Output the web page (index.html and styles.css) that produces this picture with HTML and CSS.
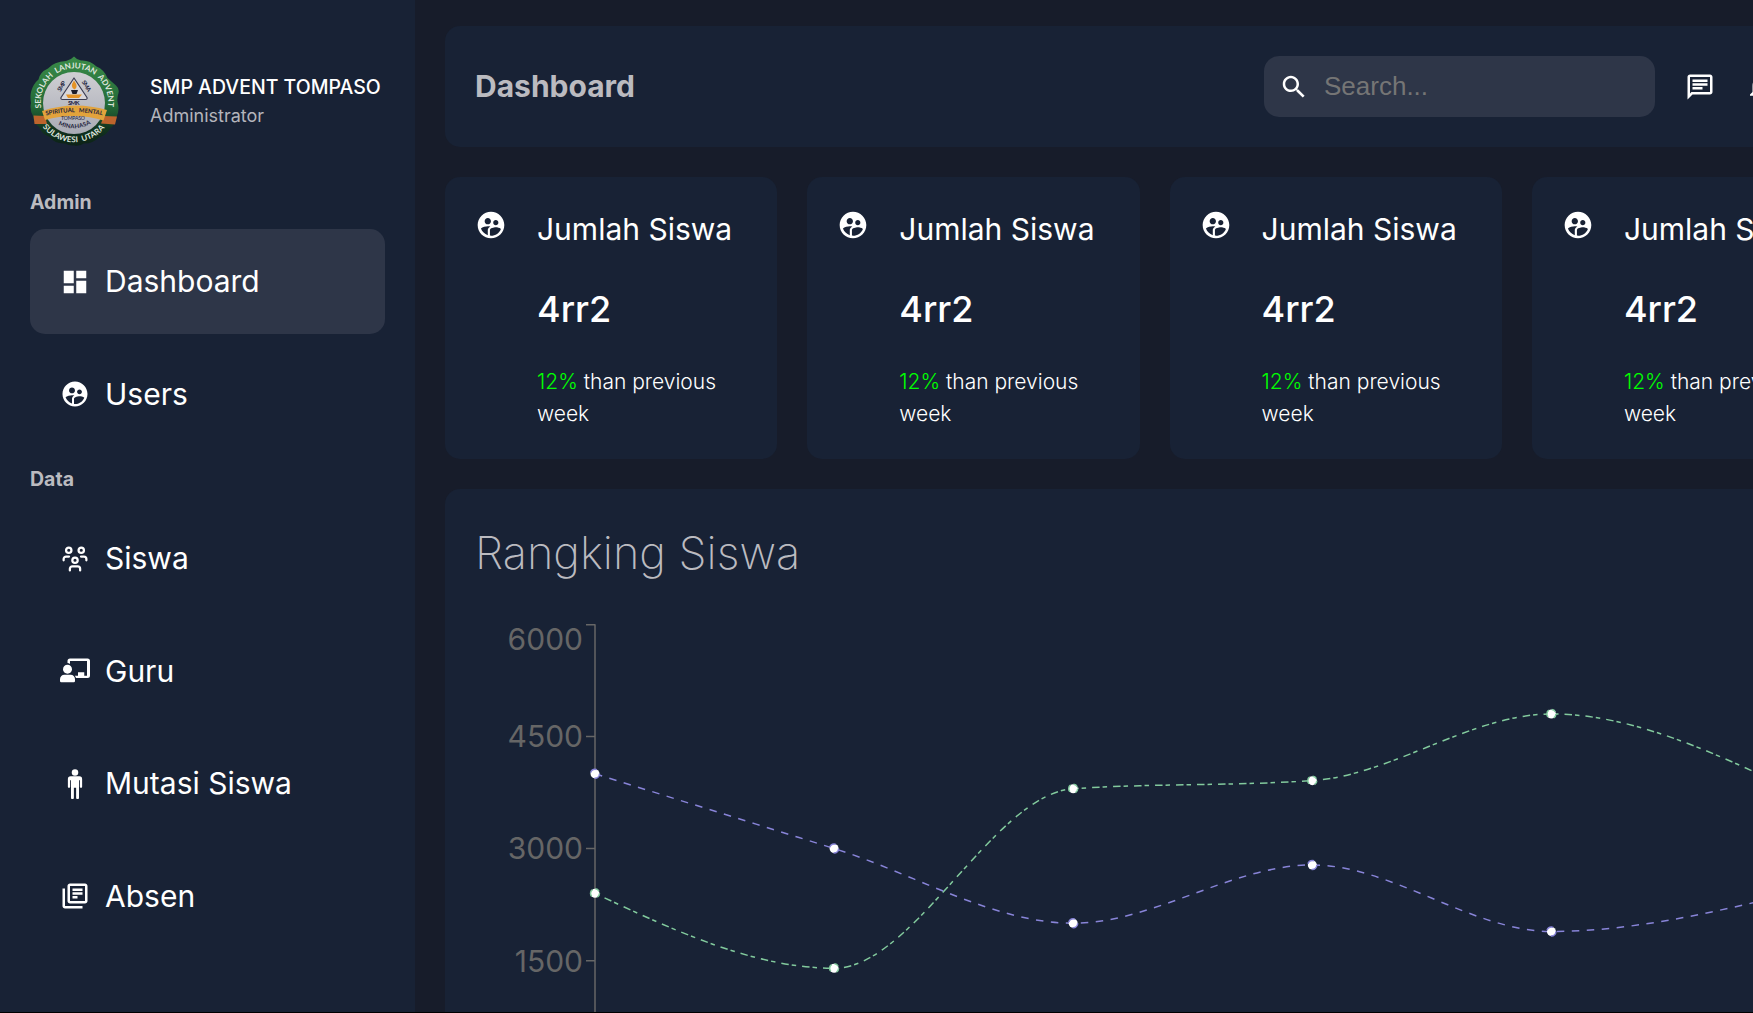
FILE: index.html
```html
<!DOCTYPE html>
<html lang="id">
<head>
<meta charset="utf-8">
<title>Dashboard</title>
<link rel="stylesheet" href="styles.css">
</head>
<body>
<svg class="defs" width="0" height="0">
  <symbol id="supervised" viewBox="0 0 24 24"><path d="M11.99 2c-5.52 0-10 4.48-10 10s4.48 10 10 10 10-4.48 10-10-4.48-10-10-10zm3.61 6.34c1.07 0 1.93.86 1.93 1.93 0 1.07-.86 1.93-1.93 1.93-1.07 0-1.93-.86-1.93-1.93-.01-1.07.86-1.93 1.93-1.93zm-6-1.58c1.3 0 2.36 1.06 2.36 2.36 0 1.3-1.06 2.36-2.36 2.36s-2.36-1.06-2.36-2.36c0-1.31 1.05-2.36 2.36-2.36zm0 9.13v3.75c-2.4-.75-4.3-2.6-5.14-4.96 1.05-1.12 3.67-1.69 5.14-1.69.53 0 1.2.08 1.9.22-1.64.87-1.9 2.02-1.9 2.68zM11.99 20c-.27 0-.53-.01-.79-.04v-4.07c0-1.42 2.94-2.13 4.4-2.13 1.07 0 2.92.39 3.84 1.15-1.17 2.97-4.06 5.09-7.45 5.09z"/></symbol>
</svg>
<div class="app">
  <aside class="sidebar">
    <div class="profile">
      <svg class="logo" viewBox="0 0 90 90">
        <defs>
          <linearGradient id="ring" x1="0" y1="0" x2="0" y2="1"><stop offset="0" stop-color="#3a8c48"/><stop offset=".55" stop-color="#246a38"/><stop offset=".8" stop-color="#123520"/><stop offset="1" stop-color="#0c2117"/></linearGradient>
          <linearGradient id="disc" x1="0" y1="0" x2="0" y2="1"><stop offset="0" stop-color="#cfcfd3"/><stop offset="1" stop-color="#a9abb5"/></linearGradient>
          <path id="arc-top" d="M11.500 53A33.700 33.700 0 1 1 77.500 53"/>
          <path id="arc-bottom" d="M11.500 69.500A39.800 39.800 0 0 0 76.500 69.500"/>
          <path id="arc-ribbon" d="M15 59.700Q44 52.500 76 60.200"/>
          <path id="arc-min" d="M26.500 67.500Q44 78 64 66"/>
        </defs>
        <path fill="url(#ring)" d="M44 .5Q46.500 3.500 51 4.500Q60 4 66.500 10.500Q74 13.500 77.500 22Q82 26 86 29.500Q89.500 32.500 88.500 37Q86.500 43 88 48Q89.500 55 86.500 61Q86 68 80.500 72Q77 79 69 81.500Q62 88 54 87.500Q49 90.500 44.500 89.500Q39 90 35 87.500Q25 88 19.500 81Q11.500 78 9 71Q3.500 67 3 60Q-.5 54 1 47Q0 41 1 36Q3 28 8.500 23.500Q10 16 18 12.500Q24 5.500 36 5Q41 4 44 .5z"/>
        <circle cx="44" cy="47" r="31" fill="url(#disc)"/>
        <path fill="#bd642d" d="M3.500 59.500L15 60l2 8L4.500 68zM74 60l13 .5-2 8-14-1z"/>
        <path fill="#e2a33c" d="M12 55Q44 44.500 77 54l-3.500 10.500Q44 56 15 64z"/>
        <path fill="#d9d7da" stroke="#3c3d52" stroke-width="1.200" stroke-linejoin="round" d="M44 22L57 41.500Q57.500 43.500 55.500 43.500H32.500Q30.500 43.500 31 41.500z"/>
        <path fill="#e49327" d="M36 38.500h16l-3 3.500H38zM44 24.500Q49 31 44.500 33.500Q39.500 31 44 24.500z"/>
        <path fill="#1e1d2a" d="M41 34h7l-1.500 4h-4z"/>
        <g class="logo-ring"><text><textPath href="#arc-top" startOffset="1" textLength="116">SEKOLAH&#160; LANJUTAN&#160; ADVENT</textPath></text>
        <text><textPath href="#arc-bottom" startOffset="2" textLength="71">SULAWESI&#160; UTARA</textPath></text></g>
        <g class="logo-ink"><text transform="translate(30.500 36) rotate(-58)" textLength="11">SMP</text><text transform="translate(51.500 26) rotate(58)" textLength="12">SMA</text><text x="38" y="49.300" textLength="11.500">SMK</text>
        <text><textPath href="#arc-ribbon" startOffset="1" textLength="57">SPIRITUAL&#160;&#160; MENTAL</textPath></text>
        <text x="31" y="63.500" class="logo-small" textLength="24">TOMPASO</text><text><textPath href="#arc-min" startOffset="2" textLength="34">MINAHASA</textPath></text></g>
      </svg>
      <div class="who"><div class="school">SMP ADVENT TOMPASO</div><div class="role">Administrator</div></div>
    </div>
    <nav>
      <h2 class="group">Admin</h2>
      <a class="item active"><svg viewBox="0 0 24 24"><path d="M3 13h8V3H3v10zm0 8h8v-6H3v6zm10 0h8V11h-8v10zm0-18v6h8V3h-8z"/></svg>Dashboard</a>
      <a class="item"><svg><use href="#supervised"/></svg>Users</a>
      <h2 class="group second">Data</h2>
      <a class="item"><svg class="outline" viewBox="0 0 24 24"><circle cx="7" cy="5" r="2.150"/><circle cx="17" cy="5" r="2.150"/><circle cx="12" cy="13" r="2.150"/><path d="M2.900 13v-1a2 2 0 0 1 2-2h2.300M21.100 13v-1a2 2 0 0 0-2-2h-2.300M7.900 21.100v-1.300a2 2 0 0 1 2-2h4.200a2 2 0 0 1 2 2v1.300"/></svg>Siswa</a>
      <a class="item"><svg viewBox="0 0 24 24"><circle cx="6" cy="10.500" r="3.600"/><path d="M3.500 15h5a3.500 3.500 0 0 1 3.500 3.500V20a1 1 0 0 1-1 1H1a1 1 0 0 1-1-1v-1.500A3.500 3.500 0 0 1 3.500 15z"/><path d="M6 5.500V4a2 2 0 0 1 2-2h14a2 2 0 0 1 2 2v11.500a2 2 0 0 1-2 2h-9.200a5 5 0 0 0-1-1.800h2.600V13h5v2.700h2.200V3.900H8v2.400a5 5 0 0 0-2-.8z"/></svg>Guru</a>
      <a class="item"><svg viewBox="0 0 24 24"><circle cx="12" cy="2.700" r="2.600"/><path d="M8.500 5.800h7a2.200 2.200 0 0 1 2.200 2.200v6.200a.9.9 0 0 1-1.800 0V9h-.7v14a1.150 1.150 0 0 1-2.300 0v-8h-1.800v8a1.150 1.150 0 0 1-2.300 0V9h-.7v5.200a.9.9 0 0 1-1.800 0V8a2.200 2.200 0 0 1 2.200-2.200z"/></svg>Mutasi Siswa</a>
      <a class="item"><svg viewBox="0 0 24 24"><path d="M4 6H2v14c0 1.100.9 2 2 2h14v-2H4V6zm16-4H8c-1.100 0-2 .9-2 2v12c0 1.100.9 2 2 2h12c1.100 0 2-.9 2-2V4c0-1.100-.9-2-2-2zm0 14H8V4h12v12zM10 9h8v2h-8zm0 3h4v2h-4zm0-6h8v2h-8z"/></svg>Absen</a>
    </nav>
  </aside>
  <main class="main">
    <header class="topbar">
      <h1>Dashboard</h1>
      <div class="tools">
        <div class="search"><svg viewBox="0 0 24 24"><path d="M15.500 14h-.79l-.28-.27C15.410 12.590 16 11.110 16 9.500 16 5.910 13.090 3 9.500 3S3 5.910 3 9.500 5.910 16 9.500 16c1.610 0 3.090-.59 4.230-1.570l.27.28v.79l5 4.990L20.490 19l-4.990-5zm-6 0C7.010 14 5 11.990 5 9.500S7.010 5 9.500 5 14 7.010 14 9.500 11.990 14 9.500 14z"/></svg><input type="text" placeholder="Search..."></div>
        <svg viewBox="0 0 24 24"><path d="M4 4h16v12H5.170L4 17.170V4m0-2c-1.100 0-1.990.9-1.990 2L2 22l4-4h14c1.100 0 2-.9 2-2V4c0-1.100-.9-2-2-2H4zm2 10h8v2H6v-2zm0-3h12v2H6V9zm0-3h12v2H6V6z"/></svg>
        <svg viewBox="0 0 24 24"><path d="M12 22c1.100 0 2-.9 2-2h-4c0 1.100.9 2 2 2zm6-6v-5c0-3.070-1.630-5.640-4.500-6.320V4c0-.83-.67-1.500-1.500-1.500s-1.500.67-1.500 1.500v.68C7.640 5.360 6 7.920 6 11v5l-2 2v1h16v-1l-2-2zm-2 1H8v-6c0-2.480 1.510-4.500 4-4.500s4 2.020 4 4.500v6z"/></svg>
      </div>
    </header>
    <section class="cards">
      <article class="card"><svg><use href="#supervised"/></svg><div><h3>Jumlah Siswa</h3><strong>4rr2</strong><p><span>12%</span> than previous week</p></div></article>
      <article class="card"><svg><use href="#supervised"/></svg><div><h3>Jumlah Siswa</h3><strong>4rr2</strong><p><span>12%</span> than previous week</p></div></article>
      <article class="card"><svg><use href="#supervised"/></svg><div><h3>Jumlah Siswa</h3><strong>4rr2</strong><p><span>12%</span> than previous week</p></div></article>
      <article class="card"><svg><use href="#supervised"/></svg><div><h3>Jumlah Siswa</h3><strong>4rr2</strong><p><span>12%</span> than previous week</p></div></article>
    </section>
    <section class="panel">
      <h2>Rangking Siswa</h2>
      <svg class="chart" viewBox="475 617 1360 460" width="1360" height="460">
        <g class="axis"><path d="M595 624.250V1072.750M586 624.750h9M586 736.600h9M586 848.600h9M586 960.700h9"/></g>
        <g class="ticks"><text x="583" y="650">6000</text><text x="583" y="747">4500</text><text x="583" y="859">3000</text><text x="583" y="972">1500</text></g>
        <g class="pv"><path d="M595 893.350C674.700 930.800 754.400 968.250 834.100 968.250C913.800 968.250 993.500 794.080 1073.200 788.700C1152.900 783.320 1232.600 786.010 1312.300 780.630C1392 775.250 1471.700 713.950 1551.400 713.950C1631.100 713.950 1710.800 751.330 1790.500 788.700"/>
          <circle cx="595" cy="893.350" r="4.500"/><circle cx="834.100" cy="968.250" r="4.500"/><circle cx="1073.200" cy="788.700" r="4.500"/><circle cx="1312.300" cy="780.630" r="4.500"/><circle cx="1551.400" cy="713.950" r="4.500"/></g>
        <g class="uv"><path d="M595 773.750C674.700 798.670 754.400 823.580 834.100 848.500C913.800 873.420 993.500 923.250 1073.200 923.250C1152.900 923.250 1232.600 864.950 1312.300 864.950C1392 864.950 1471.700 931.470 1551.400 931.470C1631.100 931.470 1710.800 912.790 1790.500 894.100"/>
          <circle cx="595" cy="773.750" r="4.500"/><circle cx="834.100" cy="848.500" r="4.500"/><circle cx="1073.200" cy="923.250" r="4.500"/><circle cx="1312.300" cy="864.950" r="4.500"/><circle cx="1551.400" cy="931.470" r="4.500"/></g>
      </svg>
    </section>
  </main>
</div>
</body>
</html>
```
FILE: styles.css
```css
* { box-sizing: border-box; margin: 0; padding: 0; }
body { width: 100vw; height: 100vh; overflow: hidden; background: #171c2a; color: #fff; font-family: Inter, "Liberation Sans", sans-serif; border-bottom: 1px solid #000; }
svg { fill: #fff; flex: none; }
.defs { display: block; }
.app { display: flex; height: 1012px; overflow: hidden; }
.sidebar { flex: none; width: 415px; padding: 56px 30px 0; background: #182235; }
.profile { display: flex; align-items: center; gap: 30px; height: 90px; }
.logo { width: 90px; height: 90px; }
.logo-ring { font: 700 8px Lato, sans-serif; fill: #dfe6df; }
.logo-ink { font: 700 6px Lato, sans-serif; fill: #23233c; }
.logo-small { font-size: 5.2px; font-weight: 400; }
.school { font-size: 19.5px; font-weight: 500; line-height: 29px; white-space: nowrap; }
.role { font-size: 18px; line-height: 28px; color: #b4b5bc; }
.group { height: 29px; margin-bottom: 12px; font-size: 19.5px; font-weight: 700; line-height: 29px; color: #bbbbc0; }
.second { margin-top: 18.5px; }
nav { padding-top: 42px; }
.item { display: flex; align-items: center; gap: 15px; width: 355px; height: 105px; margin-bottom: 7.5px; padding-left: 30px; border-radius: 15px; font-size: 30px; line-height: 45px; }
.item svg { width: 30px; height: 30px; }
.item .outline { fill: none; stroke: #fff; stroke-width: 1.8; stroke-linecap: round; }
.active { background: #2e3648; }
.main { flex: none; width: 1450px; padding: 26px 0 0 30px; }
.topbar { display: flex; align-items: center; justify-content: space-between; width: 1420px; height: 121px; padding: 0 90px 0 30px; border-radius: 15px; background: #182235; }
h1 { font-size: 30px; font-weight: 700; line-height: 37px; padding-bottom: 1px; color: #bbbbc0; }
.tools { display: flex; align-items: center; gap: 30px; }
.tools > svg { width: 30px; height: 30px; }
.search { display: flex; align-items: center; width: 391px; height: 61px; padding-left: 15px; border-radius: 15px; background: #2e3648; }
.search svg { width: 30px; height: 30px; }
.search input { width: 300px; margin-left: 15px; border: 0; background: none; font: 26px "Liberation Sans", sans-serif; }
.search input::placeholder { color: #757575; }
.cards { display: grid; grid-template-columns: repeat(4, 332.3px); gap: 30px; margin-top: 30px; }
.card { display: flex; gap: 30px; height: 282px; padding: 30px; border-radius: 15px; background: #182235; }
.card svg { width: 32px; height: 36px; }
.card h3 { font-size: 30px; font-weight: 400; line-height: 45px; white-space: nowrap; }
.card strong { display: block; margin-top: 30px; font-size: 36px; font-weight: 500; line-height: 54px; }
.card p { margin-top: 30px; font-size: 21px; line-height: 32px; font-weight: 300; }
.card span { color: #0f0; }
.panel { width: 1420px; height: 640px; margin-top: 29.5px; padding: 30px; border-radius: 15px; background: #182235; }
.panel h2 { height: 98.5px; font-size: 45px; font-weight: 200; line-height: 67px; color: #bbbbc0; }
.chart { display: block; }
.axis path { fill: none; stroke: #666; stroke-width: 1.5; }
.ticks { fill: #666; font-size: 30px; text-anchor: end; }
.pv path, .uv path { fill: none; }
.pv { fill: #fff; stroke: #82ca9d; stroke-width: 1.5; stroke-dasharray: 4.5 6 7.5 3; }
.uv { fill: #fff; stroke: #8884d8; stroke-width: 1.5; stroke-dasharray: 7.5 7.5; }
```
